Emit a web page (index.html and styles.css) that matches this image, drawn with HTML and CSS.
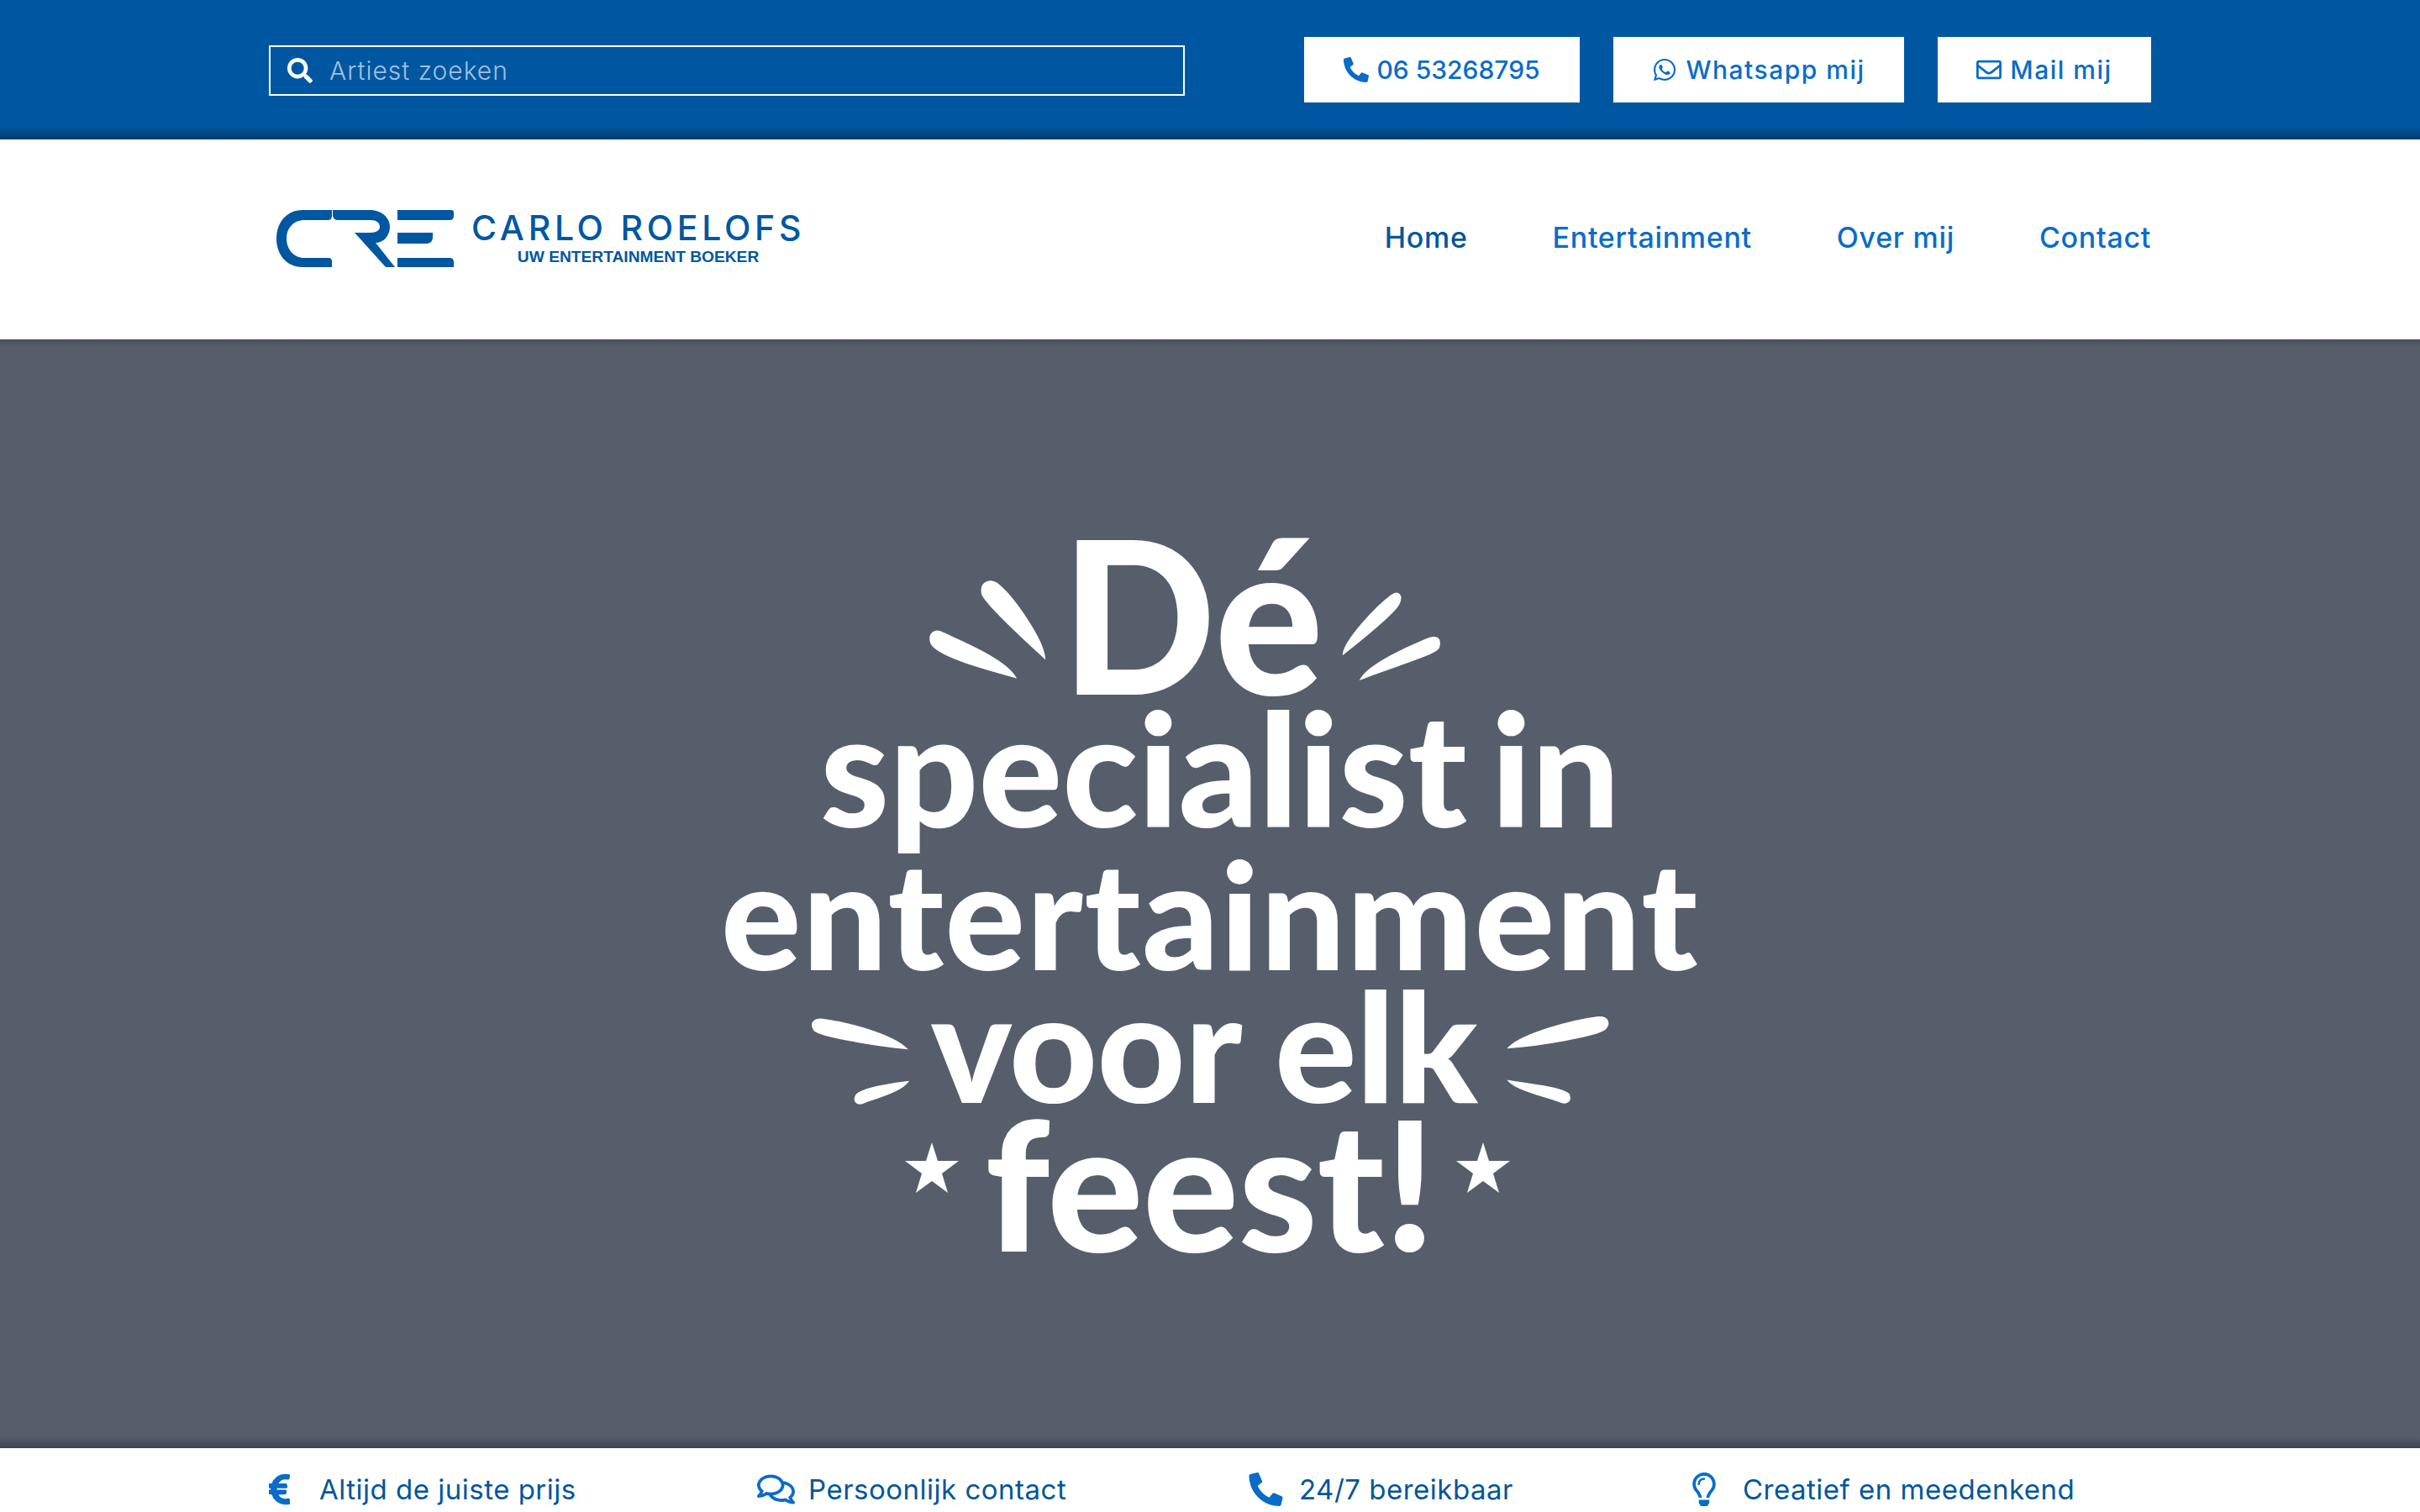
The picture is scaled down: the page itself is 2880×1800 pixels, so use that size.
FILE: index.html
```html
<!DOCTYPE html>
<html lang="nl">
<head>
  <meta charset="UTF-8" />
  <title>Carlo Roelofs - Uw entertainment boeker</title>
  <link rel="stylesheet" href="styles.css">
</head>
<body>
  <div class="topbar">
    <form class="search">
      <svg class="search-icon" viewBox="0 0 512 512"><path d="M505 442.7L405.3 343c-4.5-4.5-10.6-7-17-7H372c27.6-35.3 44-79.7 44-128C416 93.1 322.9 0 208 0S0 93.1 0 208s93.1 208 208 208c48.3 0 92.7-16.4 128-44v16.3c0 6.4 2.5 12.5 7 17l99.7 99.7c9.4 9.4 24.6 9.4 33.9 0l28.3-28.3c9.4-9.4 9.4-24.6.1-34zM208 336c-70.7 0-128-57.2-128-128 0-70.7 57.2-128 128-128 70.7 0 128 57.2 128 128 0 70.7-57.2 128-128 128z"/></svg>
      <span class="search-text">Artiest zoeken</span>
    </form>
    <div class="top-buttons">
      <a class="top-btn btn-phone" href="#">
        <svg class="btn-icon" viewBox="0 0 512 512"><path d="M497.39 361.8l-112-48a24 24 0 0 0-28 6.9l-49.6 60.6A370.66 370.66 0 0 1 130.6 204.11l60.6-49.6a23.94 23.94 0 0 0 6.9-28l-48-112A24.16 24.16 0 0 0 122.6.61l-104 24A24 24 0 0 0 0 48c0 256.5 207.9 464 464 464a24 24 0 0 0 23.4-18.6l24-104a24.29 24.29 0 0 0-14.01-27.6z"/></svg>
        06 53268795
      </a>
      <a class="top-btn btn-whatsapp" href="#">
        <svg class="btn-icon" viewBox="0 0 448 512"><path d="M380.9 97.1C339 55.1 283.2 32 223.9 32c-122.4 0-222 99.6-222 222 0 39.1 10.2 77.3 29.6 111L0 480l117.7-30.9c32.4 17.7 68.9 27 106.1 27h.1c122.3 0 224.1-99.6 224.1-222 0-59.3-25.2-115-67.1-157zm-157 341.6c-33.2 0-65.7-8.9-94-25.7l-6.7-4-69.8 18.3L72 359.2l-4.4-7c-18.5-29.4-28.2-63.3-28.2-98.2 0-101.7 82.8-184.5 184.6-184.5 49.3 0 95.6 19.2 130.4 54.1 34.8 34.9 56.2 81.2 56.1 130.5 0 101.8-84.9 184.6-186.6 184.6zm101.2-138.2c-5.5-2.8-32.8-16.2-37.9-18-5.1-1.9-8.8-2.8-12.5 2.8-3.7 5.6-14.3 18-17.6 21.8-3.2 3.7-6.5 4.2-12 1.4-32.6-16.3-54-29.1-75.5-66-5.7-9.8 5.7-9.1 16.3-30.3 1.8-3.7.9-6.9-.5-9.7-1.4-2.8-12.5-30.1-17.1-41.2-4.5-10.8-9.1-9.3-12.5-9.5-3.2-.2-6.9-.2-10.6-.2-3.7 0-9.7 1.4-14.8 6.9-5.1 5.6-19.4 19-19.4 46.3 0 27.3 19.9 53.7 22.6 57.4 2.8 3.7 39.1 59.7 94.8 83.8 35.2 15.2 49 16.5 66.6 13.9 10.7-1.6 32.8-13.4 37.4-26.4 4.6-13 4.6-24.1 3.2-26.4-1.3-2.5-5-3.9-10.5-6.6z"/></svg>
        Whatsapp mij
      </a>
      <a class="top-btn btn-mail" href="#">
        <svg class="btn-icon" viewBox="0 0 512 512"><path d="M464 64H48C21.49 64 0 85.49 0 112v288c0 26.51 21.49 48 48 48h416c26.51 0 48-21.49 48-48V112c0-26.51-21.49-48-48-48zm0 48v40.805c-22.422 18.259-58.168 46.651-134.587 106.49-16.841 13.247-50.201 45.072-73.413 44.701-23.208.375-56.579-31.459-73.413-44.701C106.18 199.465 70.425 171.067 48 152.805V112h416zM48 400V214.398c22.914 18.251 55.409 43.862 104.938 82.646 21.857 17.205 60.134 55.186 103.062 54.955 42.717.231 80.509-37.199 103.053-54.947 49.528-38.783 82.032-64.401 104.947-82.653V400H48z"/></svg>
        Mail mij
      </a>
    </div>
  </div>

  <header class="header">
    <a class="logo" href="#">
      <svg class="logo-mark" viewBox="329 251 211 68">
        <path d="M395 251H360C341 251 329 266 329 285C329 304 341 319 360 319H395V312Q395 308 391 308H362C350 308 341 298 341 285C341 272 350 263 362 263H390Q395 263 395 258z"/>
        <path d="M396 251H440C455 251 464 261 464 271C464 282 456 290 447 290L470 319H459L422 278H441C448 278 452 275 452 271C452 266 448 263 441 263H402Q397 263 396 258z"/>
        <path d="M473 251H537Q540 251 540 254V258Q540 263 535 263H473z"/>
        <path d="M473 278H515V283Q515 291 507 291H473z"/>
        <path d="M473 308H535Q540 308 540 313V319H473z"/>
      </svg>
      <div class="logo-text">
        <div class="logo-name">CARLO ROELOFS</div>
        <div class="logo-sub">UW ENTERTAINMENT BOEKER</div>
      </div>
    </a>
    <nav class="nav">
      <a class="active" href="#">Home</a>
      <a href="#">Entertainment</a>
      <a href="#">Over mij</a>
      <a href="#">Contact</a>
    </nav>
  </header>

  <section class="hero">
    <h1 class="hero-title">
      <span class="line line-de">
        <svg class="rays rays-de-l" viewBox="1106 694 136 115">
          <path d="M1207 809C1195 789 1150 770 1122 757C1112 751 1104 757 1107 768C1112 783 1170 799 1207 809z"/>
          <path d="M1242 786C1240 764 1205 714 1188 700C1180 691 1165 695 1168 710C1172 723 1225 770 1242 786z"/>
        </svg>
        <span class="word">Dé</span>
        <svg class="rays rays-de-r" viewBox="1601 706 116 105">
          <path d="M1601 781C1603 765 1640 725 1658 712C1666 706 1672 712 1666 723C1658 736 1620 766 1601 781z"/>
          <path d="M1622 811C1632 794 1680 772 1703 763C1712 760 1717 763 1714 774C1710 782 1660 796 1622 811z"/>
        </svg>
      </span>
      <span class="line line-specialist"><span class="word">specialist in</span></span>
      <span class="line line-entertainment"><span class="word">entertainment</span></span>
      <span class="line line-voor">
        <svg class="rays rays-voor-l" viewBox="965 1212 114 102">
          <path d="M1077 1248C1060 1232 1010 1218 980 1214C968 1212 963 1218 968 1226C975 1234 1045 1245 1077 1248z"/>
          <path d="M1079 1288C1060 1290 1024 1296 1018 1304C1014 1312 1020 1316 1028 1312C1045 1306 1072 1298 1079 1288z"/>
        </svg>
        <span class="word">voor elk</span>
        <svg class="rays rays-voor-r" viewBox="1796 1212 118 103">
          <path d="M1796 1248C1812 1232 1870 1216 1902 1212C1914 1211 1916 1220 1910 1226C1900 1234 1830 1246 1796 1248z"/>
          <path d="M1796 1288C1815 1291 1860 1296 1867 1304C1870 1312 1864 1316 1856 1312C1838 1306 1805 1298 1796 1288z"/>
        </svg>
      </span>
      <span class="line line-feest">
        <svg class="star" viewBox="0 0 64 60"><path d="M32 0L39 22H64L44 37L51 60L32 46L13 60L20 37L0 22H25z"/></svg>
        <span class="word">feest!</span>
        <svg class="star" viewBox="0 0 64 60"><path d="M32 0L39 22H64L44 37L51 60L32 46L13 60L20 37L0 22H25z"/></svg>
      </span>
    </h1>
  </section>

  <div class="usp-bar">
    <div class="usp">
      <svg class="usp-icon usp-euro" viewBox="0 0 320 512"><path d="M310.7 413.8c-1.3-6.6-7.8-10.9-14.4-9.4-10.7 2.4-27.4 5.4-45.4 5.4-56.8 0-101.9-34.8-121.5-85.4h113.7a12 12 0 0 0 11.7-9.4l6.4-28.4c1.7-7.5-4-14.6-11.7-14.6H115.2c-1.2-14.3-1.4-28.3.1-42.2H262a12 12 0 0 0 11.7-14.6l-6.5-29a12 12 0 0 0-11.7-9.4H130.2c20.9-47.3 65.7-81.2 121.5-81.2 14.2 0 28.1 2 37.6 4 6.3 1.2 12.4-2.6 14.1-8.8l10.7-39c1.9-6.9-2.4-14-9.4-15.4-10.5-2-31.3-4.8-52.4-4.8C156.8 32 79.2 90.7 50.1 176H12a12 12 0 0 0-12 12v29a12 12 0 0 0 12 12h26.1c-1.2 13.8-1.4 27.7-.2 42.2H12a12 12 0 0 0-12 12v28a12 12 0 0 0 12 12h36.2c27.4 88.7 103.8 156.8 206.2 156.8 25.9 0 47.8-4.5 60.8-7.9 6.1-1.6 9.9-7.7 8.7-13.9z"/></svg>
      <span>Altijd de juiste prijs</span>
    </div>
    <div class="usp">
      <svg class="usp-icon usp-comments" viewBox="0 0 576 512"><path d="M532 386.2c27.5-27.1 44-61.1 44-98.2 0-80-76.5-146.1-176.2-157.9C368.3 72.5 294.3 32 208 32 93.1 32 0 103.6 0 192c0 37 16.5 71 44 98.2-15.3 30.7-37.3 54.5-37.7 54.9-6.3 6.7-8.1 16.5-4.4 25 3.6 8.5 12 14 21.2 14 53.5 0 96.7-20.2 125.2-38.8 9.2 2.1 18.7 3.7 28.4 4.9C208.1 407.6 281.8 448 368 448c20.8 0 40.8-2.4 59.8-6.8C456.3 459.7 499.4 480 553 480c9.2 0 17.5-5.5 21.2-14 3.6-8.5 1.9-18.3-4.4-25-.4-.3-22.5-24.1-37.8-54.8zm-392.8-92.3L122.1 305c-14.1 9.1-28.5 16.3-43.1 21.4 2.7-4.7 5.4-9.7 8-14.8l15.5-31.1L77.7 256C64.2 242.6 48 220.7 48 192c0-60.7 73.3-112 160-112s160 51.3 160 112-73.3 112-160 112c-16.5 0-33-1.9-49-5.6l-19.8-4.5zM498.3 352l-24.7 24.4 15.5 31.1c2.6 5.1 5.3 10.1 8 14.8-14.6-5.1-29-12.3-43.1-21.4l-17.1-11.1-19.9 4.6c-16 3.7-32.5 5.6-49 5.6-54 0-102.2-20.1-131.3-49.7C338 339.5 416 272.9 416 192c0-3.4-.4-6.7-.7-10C479.7 196.5 528 238.8 528 288c0 28.7-16.2 50.6-29.7 64z"/></svg>
      <span>Persoonlijk contact</span>
    </div>
    <div class="usp">
      <svg class="usp-icon usp-phone" viewBox="0 0 512 512"><path d="M497.39 361.8l-112-48a24 24 0 0 0-28 6.9l-49.6 60.6A370.66 370.66 0 0 1 130.6 204.11l60.6-49.6a23.94 23.94 0 0 0 6.9-28l-48-112A24.16 24.16 0 0 0 122.6.61l-104 24A24 24 0 0 0 0 48c0 256.5 207.9 464 464 464a24 24 0 0 0 23.4-18.6l24-104a24.29 24.29 0 0 0-14.01-27.6z"/></svg>
      <span>24/7 bereikbaar</span>
    </div>
    <div class="usp">
      <svg class="usp-icon usp-bulb" viewBox="0 0 352 512"><path d="M176 80c-52.94 0-96 43.06-96 96 0 8.84 7.16 16 16 16s16-7.16 16-16c0-35.3 28.72-64 64-64 8.84 0 16-7.16 16-16s-7.16-16-16-16zM96.06 459.17c0 3.15.93 6.22 2.68 8.84l24.51 36.84c2.97 4.46 7.97 7.14 13.32 7.14h78.85c5.36 0 10.36-2.68 13.32-7.14l24.51-36.84c1.74-2.62 2.67-5.7 2.68-8.84l.05-43.18H96.02l.04 43.18zM176 0C73.72 0 0 82.97 0 176c0 44.37 16.45 84.85 43.56 115.78 16.64 18.99 42.74 58.8 52.42 92.16v.06h48v-.12c-.01-4.77-.72-9.51-2.15-14.07-5.59-17.81-22.82-64.77-62.17-109.67-20.54-23.43-31.52-53.15-31.61-84.14-.2-73.64 59.67-128 127.95-128 70.58 0 128 57.42 128 128 0 30.97-11.24 60.85-31.65 84.14-39.11 44.61-56.42 91.47-62.1 109.46a47.507 47.507 0 0 0-2.22 14.3v.1h48v-.05c9.68-33.37 35.78-73.18 52.42-92.16C335.55 260.85 352 220.37 352 176 352 78.8 273.2 0 176 0z"/></svg>
      <span>Creatief en meedenkend</span>
    </div>
  </div>
</body>
</html>
```

FILE: styles.css
```css
:root {
  --blauw: #0057a1;
  --blauw-licht: #0a6cc9;
  --blauw-tekst: #00569c;
}
* {
  box-sizing: border-box;
}
html, body {
  height: 100%;
}
body {
  margin: 0;
  font-family: 'Inter', sans-serif;
  background: white;
  overflow: hidden;
}
a {
  text-decoration: none;
}

/* bovenste balk */
.topbar {
  height: 166px;
  padding: 44px 320px 0;
  background: linear-gradient(var(--blauw) 150px, #003c70);
  display: flex;
  justify-content: space-between;
  align-items: flex-start;
}
.search {
  width: 1090px;
  height: 60px;
  margin-top: 10px;
  padding-left: 20px;
  border: 2px solid white;
  display: flex;
  align-items: center;
  gap: 20px;
}
.search-icon {
  width: 30px;
  height: 30px;
  fill: white;
}
.search-text {
  color: #a3c0de;
  font-size: 30px;
  font-weight: 300;
  letter-spacing: 1px;
}
.top-buttons {
  display: flex;
  gap: 40px;
}
.top-btn {
  height: 78px;
  background: white;
  color: var(--blauw-licht);
  font-size: 30px;
  font-weight: 500;
  display: flex;
  align-items: center;
  justify-content: center;
  gap: 10px;
  letter-spacing: 1.5px;
}
.btn-phone { width: 328px; letter-spacing: 0; gap: 9px; }
.btn-whatsapp { width: 346px; }
.btn-mail { width: 254px; }
.btn-icon {
  width: 30px;
  height: 30px;
  fill: var(--blauw-licht);
}

/* logo en menu */
.header {
  height: 238px;
  padding: 0 320px 0 329px;
  display: flex;
  justify-content: space-between;
  align-items: center;
}
.logo {
  display: flex;
  align-items: flex-start;
  gap: 21px;
  margin-top: -2px;
}
.logo-mark {
  width: 211px;
  height: 68px;
  fill: var(--blauw);
}
.logo-text {
  padding-top: 3px;
  text-align: center;
  color: var(--blauw);
}
.logo-name {
  font-size: 41px;
  font-weight: 500;
  line-height: 36px;
  letter-spacing: 4.7px;
  white-space: nowrap;
}
.logo-sub {
  margin-top: 7px;
  font-family: 'Liberation Sans', sans-serif;
  font-weight: bold;
  font-size: 19.2px;
  line-height: 20px;
}
.nav {
  display: flex;
  gap: 101px;
  margin-top: -5px;
}
.nav a {
  color: var(--blauw-licht);
  font-size: 34px;
  font-weight: 500;
  letter-spacing: 0.7px;
}
.nav a.active {
  color: var(--blauw-tekst);
}

/* grote tekst */
.hero {
  height: 1320px;
  background: linear-gradient(#4a505e, #565e6c 10px, #565e6c 1306px, #3f4450);
  display: flex;
  align-items: center;
  justify-content: center;
}
.hero-title {
  margin: 5px 0 0;
  color: white;
  font-family: 'Lato', sans-serif;
  font-weight: 900;
  display: flex;
  flex-direction: column;
  align-items: center;
}
.line {
  display: flex;
  justify-content: center;
  align-items: center;
  white-space: nowrap;
}
.word {
  line-height: 0.7;
}
.rays, .star {
  fill: white;
  flex: none;
}
.rays {
  stroke: white;
  stroke-width: 2px;
  overflow: visible;
}
.line-de {
  height: 190px;
  font-size: 254px;
  gap: 32px;
  margin-left: -58px;
}
.line-de .word {
  margin: 0 -21px 0 -7px;
  transform: scaleX(0.95);
}
.rays-de-l { width: 136px; height: 115px; margin: 40px -13px 0 0; }
.rays-de-r { width: 116px; height: 105px; margin: 54px 0 0 6px; }
.line-specialist {
  height: 179px;
  font-size: 186px;
  word-spacing: -16px;
  margin-left: 24px;
}
.line-entertainment {
  height: 167px;
  font-size: 178px;
  letter-spacing: 1.7px;
}
.line-voor {
  height: 146px;
  font-size: 182px;
  letter-spacing: -0.6px;
  gap: 33px;
}
.line-voor .word {
  margin: 0 5px 0 -5px;
}
.rays-voor-l { width: 114px; height: 102px; margin-top: 40px; }
.rays-voor-r { width: 118px; height: 103px; margin-top: 40px; }
.line-feest {
  height: 184px;
  font-size: 213px;
  letter-spacing: -0.5px;
  gap: 31px;
  margin-left: -6px;
}
.line-feest .word {
  margin-right: -6px;
}
.star {
  width: 64px;
  height: 60px;
  margin-top: -36px;
}

/* onderste balk */
.usp-bar {
  height: 76px;
  padding: 22px 0 0 320px;
  display: grid;
  grid-template-columns: 580px 586px 528px 1fr;
  align-items: center;
}
.usp {
  display: flex;
  align-items: center;
  color: var(--blauw-tekst);
  font-size: 33px;
  letter-spacing: 0.5px;
  white-space: nowrap;
}
.usp-icon {
  fill: var(--blauw-licht);
  height: 40px;
}
.usp-euro { width: 25px; margin-right: 35px; stroke: var(--blauw-licht); stroke-width: 20px; }
.usp-comments { width: 47px; margin-right: 15px; }
.usp-phone { width: 41px; margin-right: 19px; }
.usp-bulb { width: 28px; margin-right: 32px; }
```
